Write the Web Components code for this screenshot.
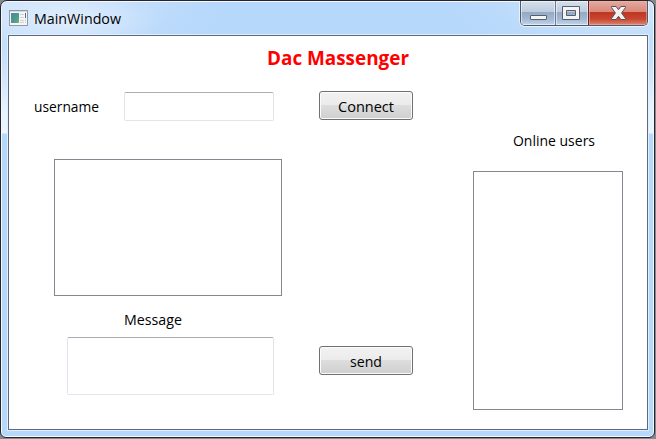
<!DOCTYPE html>
<html lang="en"><head><meta charset="utf-8"><title>MainWindow</title>
<style>html,body{margin:0;width:656px;height:439px;overflow:hidden;background:#85898d;font-family:"Open Sans","Noto Sans",sans-serif}</style></head>
<body>
<app-window caption="MainWindow"><messenger-form></messenger-form></app-window>
<script>
const define=(name,html,setup)=>customElements.define(name,class extends HTMLElement{
  constructor(){super();this.attachShadow({mode:'open'}).innerHTML=html;}
  connectedCallback(){if(setup)setup(this,this.shadowRoot);}
});

define('ui-label',`<style>
:host{display:block;height:20px;font-size:14px;line-height:20px;color:#000;white-space:nowrap}
svg{display:block;overflow:visible;height:20px}
</style><svg><text x="0" y="15" lengthAdjust="spacingAndGlyphs"></text></svg>`,(el,root)=>{
  const w=el.getAttribute('width'),t=root.querySelector('text'),s=root.querySelector('svg');
  t.textContent=el.getAttribute('text');t.setAttribute('textLength',w);s.setAttribute('width',w);
  t.style.fill='currentColor';
});

define('ui-button',`<style>
:host{box-sizing:border-box;display:flex;justify-content:center;align-items:center;width:94px;height:29px;border:1px solid #707070;border-radius:3px;
background:linear-gradient(#f2f2f2,#ebebeb 49%,#dddddd 50%,#cfcfcf);box-shadow:inset 0 0 0 1px #fbfbfb}
</style><slot></slot>`);

define('ui-field',`<style>
:host{box-sizing:border-box;display:block;width:150px;height:29px;background:#fff;border:1px solid #e2e5ee;border-top-color:#abadb3;border-radius:2px}
</style>`);

define('ui-list',`<style>
:host{box-sizing:border-box;display:block;background:#fff;border:1px solid #828790}
</style>`);

define('window-controls',`<style>
:host{display:flex;box-sizing:border-box;width:128px;height:25px;border:1px solid #4d5a6c;border-top:0;border-radius:0 0 5px 5px;overflow:hidden;box-shadow:0 0 0 1px #e7f2fd}
div{box-sizing:border-box;height:24px;box-shadow:inset 0 0 0 1px #ffffff88;background:linear-gradient(#d5e0ec,#bccbdd 46%,#94a9c3 48%,#a2b8d2 75%,#c2d5eb)}
.min{width:35px;border-right:1px solid #697b92}
.max{width:33px;border-right:1px solid #61222a}
.close{width:58px;background:linear-gradient(#e6aaa0,#d98779 46%,#bd3620 48%,#c9452f 75%,#d98773);box-shadow:inset 0 0 0 1px #f6b7a988}
svg{display:block}
</style>
<div class="min"><svg width="34" height="24"><rect x="9.5" y="14.5" width="16" height="4" rx=".5" fill="#f4f4f3" stroke="#555f70"/></svg></div>
<div class="max"><svg width="32" height="24"><path fill-rule="evenodd" d="M6.500 5.500h17v13h-17zM10.500 9.500v5h9v-5z" fill="#f4f4f3" stroke="#555f70"/></svg></div>
<div class="close"><svg width="58" height="24"><path d="M22.500 5.500h4.600l2.400 3.200 2.400-3.200h4.600v1l-3.900 5.500 3.900 5.500v1h-4.600l-2.400-3.200-2.400 3.200h-4.600v-1l3.900-5.500-3.900-5.500z" fill="#f3f2f1" stroke="#59505b" stroke-linejoin="round"/></svg></div>`);

define('app-icon',`<style>:host{display:block;width:19px;height:16px}svg{display:block}</style>
<svg width="19" height="16"><defs><linearGradient id="g" x1="0" y1="0" x2="1" y2="1"><stop offset="0" stop-color="#4888a6"/><stop offset=".6" stop-color="#4f9b85"/><stop offset="1" stop-color="#72b283"/></linearGradient></defs>
<rect x=".5" y=".5" width="18" height="15" fill="#f5f6f7" stroke="#9299a1"/><rect x="1" y="1" width="17" height="1" fill="#d5d9dd"/><rect x="2" y="3" width="8" height="10" fill="url(#g)"/><path d="M11 4.500h4M11 7.500h4M11 10.500h4M11 12.500h4" stroke="#cdd1d5"/><rect x="16" y="3" width="1" height="5" fill="#4b708b"/><rect x="16" y="9" width="1" height="4" fill="#d5dadf"/></svg>`);

define('app-window',`<style>
:host{box-sizing:border-box;display:flex;flex-direction:column;width:655px;height:438px;border:1px solid #24252f;border-radius:7px 7px 6px 6px;overflow:hidden;
box-shadow:inset 0 0 0 1px #f2f8fe;padding:0 6px 7px 7px;
background:radial-gradient(ellipse 90px 32px at 68px 18px,#e6f1fecc,#dcecfd77 55%,#b6d8fb00),radial-gradient(ellipse 220px 80px at 0 0,#d7e8fbdd,#b6d8fb00),radial-gradient(ellipse 200px 70px at 100% 0,#d7e8fbcc,#b6d8fb00),linear-gradient(#fff0 40px,#e9f3fd 110px,#edf5fe 132px,#b6d8fb 133px),#b6d8fb}
header{height:34px;display:flex;align-items:flex-start}
app-icon{margin:9px 0 0 1px}
ui-label{margin:8px auto 0 6px}
window-controls{margin-right:0}
main{box-sizing:border-box;flex:1;border:1px solid #5d697c;background:#fff;box-shadow:0 0 0 1px #e2f0fe}
</style><header><app-icon></app-icon><ui-label width="87" text="MainWindow"></ui-label><window-controls></window-controls></header><main><slot></slot></main>`);

define('messenger-form',`<style>
:host{display:block;padding-top:14px}
h1{margin:0 0 0 258px;height:18px;color:#f00;font-weight:700}
h1 ui-label{font-size:19px;color:#f00}
.body{display:flex}
.talk{width:464px;padding-top:23px;box-sizing:border-box}
.row{display:flex}
.login{padding-left:25px;height:29px}
.login>ui-label{margin:6px 25px 0 0}
.login ui-field{margin-top:1px}
.login ui-button{margin-left:45px}
.history{width:228px;height:137px;margin:39px 0 0 45px}
.caption{margin:14px 0 7px 115px}
.compose{padding-left:58px}
.compose ui-field{width:207px;height:58px}
.compose ui-button{margin:9px 0 0 45px}
ui-button ui-label{padding-top:2px}
aside{padding-top:63px}
aside ui-label{margin-left:40px}
aside ui-list{width:150px;height:239px;margin-top:20px}
</style>
<h1><ui-label width="142" text="Dac Massenger"></ui-label></h1>
<div class="body"><section class="talk">
<div class="row login"><ui-label width="65" text="username"></ui-label><ui-field></ui-field><ui-button><ui-label width="56" text="Connect"></ui-label></ui-button></div>
<ui-list class="history"></ui-list>
<ui-label class="caption" width="58" text="Message"></ui-label>
<div class="row compose"><ui-field></ui-field><ui-button><ui-label width="32" text="send"></ui-label></ui-button></div>
</section><aside><ui-label width="82" text="Online users"></ui-label><ui-list></ui-list></aside></div>`);
</script></body></html>
